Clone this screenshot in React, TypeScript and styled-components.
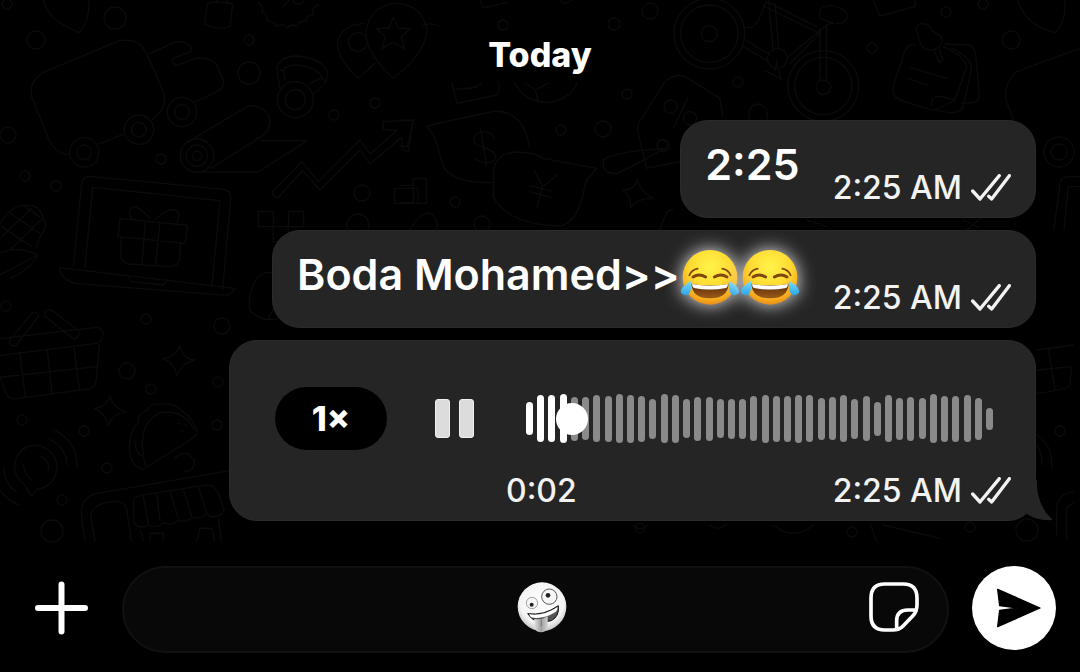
import React, { useState } from "react";
import styled, { createGlobalStyle } from "styled-components";

const GlobalStyle = createGlobalStyle`
  *, *::before, *::after { box-sizing: border-box; }
  body {
    margin: 0;
    background: #000;
    color: #fff;
    font-family: Inter, "Liberation Sans", sans-serif;
  }
  button, input { font: inherit; color: inherit; }
`;

const Page = styled.main`
  display: flex;
  flex-direction: column;
  min-height: 100vh;
  overflow: hidden;
`;

const Chat = styled.section`
  position: relative;
  flex: 1;
  display: flex;
  flex-direction: column;
  gap: 45px;
  padding: 35px 44px 24px;
`;

const Wallpaper = styled.svg`
  position: absolute;
  inset: 0;
  width: 100%;
  height: 100%;
  fill: none;
  stroke: #0b0b0b;
  stroke-width: 4;
  stroke-linecap: round;
  stroke-linejoin: round;
`;

const DayLabel = styled.h1`
  position: relative;
  align-self: center;
  margin: 0;
  font-size: 34px;
  line-height: 40px;
  font-weight: 800;
`;

const Messages = styled.ol`
  position: relative;
  display: flex;
  flex-direction: column;
  align-items: flex-end;
  gap: 12px;
  margin: 0;
  padding: 0;
  list-style: none;
`;

const Bubble = styled.li<{ $voice?: boolean }>`
  position: relative;
  display: flex;
  align-items: ${(p) => (p.$voice ? "flex-start" : "stretch")};
  gap: ${(p) => (p.$voice ? 48 : 33)}px;
  width: ${(p) => (p.$voice ? "100%" : "auto")};
  max-width: ${(p) => (p.$voice ? "807px" : "100%")};
  padding: ${(p) => (p.$voice ? "46px 24px 11px 45px" : "17px 24px 11px")};
  border: 1px solid #2b2b2b;
  border-radius: 28px;
  background: #252525;
`;

const MessageText = styled.p`
  display: flex;
  margin: 0;
  font-size: 43px;
  line-height: 52px;
  font-weight: 600;
`;

const Meta = styled.span`
  display: flex;
  align-items: center;
  align-self: flex-end;
  gap: 9px;
  padding-top: 32px;
  font-size: 32px;
  line-height: 36px;
  font-weight: 500;
  color: #f2f2f2;
`;

const Ticks = styled.svg`
  width: 40px;
  height: 28px;
  fill: none;
  stroke: #f2f2f2;
  stroke-width: 10;
  stroke-linecap: round;
  stroke-linejoin: round;
`;

const Laugh = styled.svg`
  width: 60px;
  height: 58px;
  filter: drop-shadow(0 0 9px rgba(255, 255, 255, 0.9));
`;

const Tail = styled.svg`
  position: absolute;
  right: -17px;
  bottom: -1px;
  width: 32px;
  height: 42px;
`;

const SpeedButton = styled.button`
  width: 112px;
  height: 63px;
  padding: 0;
  border: 0;
  border-radius: 32px;
  background: #000;
  font-size: 34px;
  line-height: 40px;
  font-weight: 800;
`;

const PauseButton = styled.button`
  display: flex;
  justify-content: space-between;
  align-items: center;
  width: 39px;
  height: 63px;
  padding: 0;
  border: 0;
  background: none;
`;

const PauseBar = styled.span`
  width: 15px;
  height: 39px;
  border: 1px solid #f0f0f0;
  border-radius: 3px;
  background: #dcdcdc;
`;

const Player = styled.div`
  flex: 1;
  display: flex;
  flex-direction: column;
  gap: 23px;
  margin-left: -16px;
`;

const Track = styled.div`
  position: relative;
  display: flex;
  justify-content: space-between;
  align-items: center;
  height: 63px;
  margin: 0 18px 0 20px;
`;

const WaveBar = styled.span<{ $played: boolean }>`
  width: 7px;
  border-radius: 4px;
  background: ${(p) => (p.$played ? "#fff" : "#8a8a8a")};
`;

const Seek = styled.input`
  position: absolute;
  inset: 0;
  width: 100%;
  height: 100%;
  margin: 0;
  appearance: none;
  background: transparent;

  &::-webkit-slider-thumb {
    appearance: none;
    width: 32px;
    height: 32px;
    border-radius: 50%;
    background: #fff;
  }
`;

const PlayerFooter = styled.div`
  display: flex;
  justify-content: space-between;

  ${Meta} { padding-top: 0; }
`;

const Composer = styled.form`
  position: relative;
  display: flex;
  align-items: flex-start;
  gap: 23px;
  padding: 21px 24px 19px 35px;
`;

const AttachButton = styled.button`
  width: 53px;
  height: 84px;
  margin-right: 11px;
  padding: 0;
  border: 0;
  background: none;
`;

const Field = styled.div`
  flex: 1;
  display: grid;
  grid-template-columns: 1fr auto;
  align-items: center;
  height: 87px;
  padding: 0 28px 5px;
  border: 2px solid #111;
  border-radius: 44px;
  background: #080808;
`;

const TextBox = styled.input`
  grid-area: 1 / 1 / 2 / 3;
  width: 100%;
  height: 100%;
  border: 0;
  outline: 0;
  background: none;
  font-size: 32px;
`;

const DraftEmoji = styled.svg`
  grid-area: 1 / 1 / 2 / 3;
  justify-self: center;
  width: 50px;
  height: 52px;
  margin-left: 12px;
  pointer-events: none;
`;

const StickerButton = styled.button`
  grid-area: 1 / 2 / 2 / 3;
  width: 50px;
  height: 50px;
  padding: 0;
  border: 0;
  background: none;
`;

const SendButton = styled.button`
  width: 84px;
  height: 84px;
  padding: 0;
  border: 0;
  border-radius: 50%;
  background: #fff;
`;

const Icon = styled.svg`
  display: block;
  width: 100%;
  height: 100%;
`;

const WAVE = [
  33, 47, 47, 49, 44, 43, 47, 46, 49, 48, 46, 40, 49, 48, 39, 44, 44, 39, 40, 40, 45,
  48, 46, 46, 48, 47, 42, 43, 47, 40, 45, 34, 47, 42, 44, 41, 49, 46, 46, 47, 42, 22,
];

const DOTS: [number, number, number][] = [
  [7, 4, 5], [36, 40, 9], [115, 18, 11], [249, 40, 5], [249, 73, 11], [8, 135, 8],
  [25, 176, 5], [56, 186, 5], [161, 159, 5], [334, 115, 5], [375, 103, 5], [362, 193, 8],
  [358, 225, 11], [561, 130, 5], [603, 129, 8], [650, 11, 8], [627, 94, 5], [455, 202, 5],
  [482, 224, 8], [872, 48, 5], [946, 12, 5], [983, 4, 5], [1011, 40, 9], [738, 82, 5],
  [662, 145, 5], [6, 306, 5], [146, 319, 5], [222, 326, 8], [127, 371, 8], [151, 389, 5],
  [218, 382, 5], [22, 420, 5], [84, 431, 5], [217, 425, 5], [107, 468, 5], [62, 500, 5],
  [52, 531, 11], [1060, 431, 5], [852, 532, 5], [1027, 530, 11], [970, 527, 5], [1059, 152, 15],
  [1059, 152, 8], [640, 528, 5], [503, 25, 5], [614, 24, 6],
];

const ChatWallpaper = () => (
  <Wallpaper viewBox="0 0 1080 548" preserveAspectRatio="xMinYMin slice" aria-hidden="true">
    <g style={{ strokeWidth: 1.3 }}>
      {DOTS.map(([x, y, r], i) => (
        <circle key={i} cx={x} cy={y} r={r} />
      ))}
    </g>
    <g transform="scale(.3333)">
      {/* heart, gift tag, rosette */}
      <path d="M130 0Q140 60 238 98Q272 55 266 0M622 10L614 72Q655 92 690 80L698 12Q660 2 622 10M648 8l4-10M682 6l0-10M775 8q15 10 12 30q18 4 14 26q20-4 28 16q20-14 32 4q14-16 32-4q4-20 26-16q-2-18 20-20q-4-20 16-30M850 20l20-22M878 0a18 18 0 0 0 34 0" />
      {/* truck */}
      <path d="M208 464Q165 462 145 415L95 290Q86 240 135 215L360 122Q415 112 440 160L490 275Q505 320 458 358M298 432L372 402M448 160L530 125Q570 125 576 152L520 175Q508 185 530 196L590 174Q640 170 655 205L672 245Q670 268 650 276L584 306" />
      <circle cx="253" cy="457" r="44" /><circle cx="253" cy="457" r="22" />
      <circle cx="417" cy="389" r="44" /><circle cx="417" cy="389" r="22" />
      <circle cx="546" cy="336" r="44" /><circle cx="546" cy="336" r="22" />
      {/* kettlebell */}
      <circle cx="886" cy="299" r="54" /><circle cx="886" cy="299" r="30" />
      <path d="M840 265L830 205Q840 170 890 168Q970 175 984 220Q980 260 940 280M856 240L850 212Q860 192 900 196Q955 205 966 232L930 250M836 210L850 212M966 235L978 245" />
      {/* yoga mat */}
      <circle cx="591" cy="467" r="50" /><circle cx="591" cy="467" r="32" /><circle cx="591" cy="467" r="14" />
      <path d="M570 422L745 318Q800 315 810 360Q810 395 780 412L632 505M780 422H922L775 516H580" />
      {/* map pins */}
      <path d="M1125 190L1075 235Q1010 175 1012 125Q1025 75 1090 70M1180 235Q1098 160 1098 95Q1110 15 1190 10Q1270 15 1282 95Q1270 165 1180 235M1180 52l14 32 36 2-26 24 10 36-34-20-34 20 10-36-26-24 36-2z" />
      <circle cx="1074" cy="126" r="28" />
      {/* rising graph */}
      <path d="M818 575L905 485L955 545L1080 420L1110 462L1190 392L1150 388V365L1240 360L1225 455L1208 450L1205 412L1110 492L1080 450L960 570L908 512L835 592Q818 596 818 575" />
      {/* laptop with gift */}
      <path d="M220 800L245 550Q250 525 280 530L670 568Q694 572 692 595L668 870M255 803L278 562L660 602L636 860M178 803L705 865Q695 880 680 886L225 850Q185 840 178 803M382 826L395 845L490 855L505 838M360 655L562 676L556 730L354 710ZM364 712L362 770Q368 788 385 792L510 800Q535 798 538 780L542 730M436 664L426 794M480 668L466 798M450 656Q400 600 390 632Q386 652 400 658M465 658Q520 610 536 640Q536 660 530 668" />
      {/* corn */}
      <path d="M0 670Q30 620 70 616Q120 612 128 650Q148 680 120 710L110 740M5 680L95 740M30 640L120 700M95 625L5 710M128 655L30 750M70 616L118 650M0 760Q50 735 112 765Q90 810 30 835M112 765L0 825" />
      {/* blocks */}
      <path d="M775 635h45v45h-45zM820 680h45v45h-45zM866 635h45v45h-45zM1184 565h70v45h-70zM1240 610v-75h40v75z" />
      {/* basket */}
      <path d="M0 1016L290 982Q312 985 308 1010Q305 1025 290 1030L0 1066M0 1130L18 1180Q30 1200 50 1196L270 1166Q285 1160 288 1145L298 1034M60 1062L76 1190M142 1052L156 1180M222 1042L238 1170M0 1132L290 1100M28 1022L95 940Q112 930 116 948L48 1036Q28 1044 28 1022M134 938Q144 922 160 934L238 994Q238 1012 222 1018L134 948Z" />
      {/* sparkles */}
      <path d="M540 1036Q545 1075 584 1080Q545 1090 530 1126Q525 1090 490 1076Q530 1070 540 1036M330 1188Q338 1225 378 1236Q338 1240 324 1276Q318 1240 284 1226Q320 1220 330 1188" />
      {/* taco */}
      <path d="M430 1408Q390 1400 388 1340Q390 1290 414 1270Q412 1240 440 1232Q455 1205 480 1214Q520 1205 545 1232Q585 1260 592 1298Q588 1310 570 1320L430 1408M430 1365Q415 1270 480 1238Q550 1226 584 1290M404 1320Q405 1360 430 1370L438 1400M536 1270l4 2M556 1276l4 2M544 1292l4 2M525 1375Q560 1340 584 1385Q580 1420 550 1412" />
      {/* voice beacon */}
      <path d="M95 1490L75 1456Q40 1430 44 1390Q58 1335 110 1336Q165 1345 172 1400Q165 1460 110 1468ZM160 1290Q230 1320 232 1400M150 1318Q200 1345 202 1396M12 1402Q10 1450 50 1476M0 1470Q20 1500 55 1514M125 1370Q150 1385 145 1410M70 1395Q75 1430 95 1440" />
      {/* market stall */}
      <path d="M255 1625L244 1540Q245 1490 290 1480L690 1412M285 1625L272 1550Q275 1515 320 1508Q375 1495 380 1530L395 1625M400 1500Q405 1488 430 1485L620 1455Q645 1455 655 1480L672 1530Q670 1545 650 1548Q630 1555 620 1540Q605 1560 578 1552Q560 1570 535 1560Q520 1580 490 1568Q470 1588 445 1575Q420 1590 402 1570ZM430 1490L445 1570M470 1484L480 1560M510 1475L535 1555M550 1468L575 1548M595 1460L620 1540M422 1590L430 1625M655 1555L665 1625M450 1625V1600H490V1625M590 1625L600 1585H635L645 1625" />
      {/* nut */}
      <path d="M826 820Q790 810 770 835Q740 890 750 930Q785 970 836 955M825 920L805 955" />
    </g>
    <g transform="translate(400 0) scale(.3333)">
      {/* calendar and ball */}
      <path d="M155 248L172 310L290 285Q302 270 294 245M165 268L230 262M210 268L245 250M345 248Q370 305 450 308Q520 290 530 250M375 248l30 22 40-20M405 270l10 30M240 0L250 24L320 8M480 0Q495 20 515 0M65 78Q90 65 118 78" />
      {/* dollar and yen bags */}
      <path d="M80 380L105 372L280 334Q370 330 388 440M80 380Q100 400 104 412L130 500Q160 550 275 548M280 530Q275 465 345 456Q400 455 430 475L590 505L560 540L545 600Q520 680 470 678Q320 670 280 590ZM284 415Q265 385 230 400Q205 430 250 442Q300 460 284 480Q255 500 225 475M242 385L260 500M402 510L428 560L472 525M428 560L412 622M390 556L456 574M388 575L452 592" />
      {/* price tag */}
      <path d="M740 505L712 390Q712 370 725 355L795 245Q830 215 860 232L960 295L968 350M740 505L860 480M864 292L822 382M610 480Q640 455 790 445Q720 490 650 520Q605 525 610 480" />
      <circle cx="812" cy="320" r="20" /><circle cx="870" cy="355" r="20" /><circle cx="790" cy="436" r="18" />
      <path d="M712 540Q722 575 758 596Q710 595 692 622Q695 590 668 570Q705 570 712 540M30 690Q60 635 90 640Q120 660 108 690M0 556h40v52H0M0 360l40 2l-18 78L0 438" />
    </g>
    <g transform="translate(660 0) scale(.3333)">
      {/* bicycle */}
      <circle cx="148" cy="101" r="106" /><circle cx="148" cy="101" r="86" /><circle cx="148" cy="101" r="24" />
      <circle cx="490" cy="258" r="106" /><circle cx="490" cy="258" r="86" /><circle cx="490" cy="262" r="22" />
      <path d="M480 240V85M500 240V80M320 5L470 80M310 18L480 100M326 0L340 155M345 10L356 150M385 170L500 75L520 68M390 190L480 100M255 118L330 165M250 140L325 185M250 82Q285 90 300 50L318 5M520 70L480 55Q470 22 510 16Q560 25 562 50Q555 75 530 70" />
      <circle cx="352" cy="175" r="30" /><path d="M352 178L345 212M315 212L365 238M350 190L362 235" />
      {/* pinned notes */}
      <path d="M765 133Q740 132 732 160L698 265Q700 290 720 300L820 332Q850 320 885 300L920 200Q915 170 850 140M815 318Q810 285 850 290Q870 300 885 295M855 132L930 135Q945 145 948 170L958 290Q955 310 930 308L905 310M875 145Q930 170 935 205L910 320Q900 340 870 338L830 332M750 202L862 236M745 235L805 256M775 105Q760 85 780 72Q810 68 814 90L845 110Q850 140 820 150Q780 155 775 105M822 150L838 188L848 180L838 148" />
      {/* card, heart, truck edge */}
      <path d="M640 0L660 48L765 20V0M1072 0Q1100 80 1188 98Q1222 50 1214 0M1260 145L1070 215Q1030 250 1038 300L1060 358M1182 690L1200 550Q1205 530 1225 530H1260M1212 690L1225 560H1260M268 355Q262 315 295 312Q325 318 322 355M0 690Q20 620 40 630M440 660l60 20M910 660l50 24M960 656l-40 34" />
    </g>
    <g transform="translate(600 335) scale(.3333)">
      <path d="M1310 45L1420 30M1345 40L1365 165M1310 105L1415 95L1410 150Q1400 165 1310 175M1310 300Q1360 330 1355 400M1310 330Q1328 350 1325 390M1370 600V520Q1375 475 1420 470M1400 610V530Q1400 510 1420 505M810 565L830 620M850 570L1020 610M520 570Q580 620 640 570M330 570Q355 590 380 568M100 570Q120 595 145 568" />
    </g>
  </Wallpaper>
);

const ReadTime = () => (
  <Meta>
    <time>2:25 AM</time>
    <Ticks viewBox="0 0 120 84" role="img" aria-label="Delivered">
      <path d="M5 51L27 75L85 5M53 67L62 75L115 5" />
    </Ticks>
  </Meta>
);

const TearsOfJoy = ({ id }: { id: string }) => (
  <Laugh viewBox="0 0 180 174" role="img" aria-label="face with tears of joy">
    <defs>
      <radialGradient id={`${id}-face`} cx=".5" cy=".3" r=".72">
        <stop offset="0" stopColor="#fff34a" />
        <stop offset=".5" stopColor="#ffdc33" />
        <stop offset=".85" stopColor="#f6ab1f" />
        <stop offset="1" stopColor="#e58613" />
      </radialGradient>
      <linearGradient id={`${id}-tear`} x1="0" y1="0" x2="0" y2="1">
        <stop offset="0" stopColor="#7fdcfa" />
        <stop offset="1" stopColor="#2aa5e8" />
      </linearGradient>
      <linearGradient id={`${id}-mouth`} x1="0" y1="0" x2="0" y2="1">
        <stop offset="0" stopColor="#5a2a08" />
        <stop offset="1" stopColor="#9a5a18" />
      </linearGradient>
    </defs>
    <circle cx="90" cy="88" r="82" fill={`url(#${id}-face)`} />
    <g fill="none" stroke="#80470c" strokeLinecap="round">
      <path d="M28 82Q34 66 53 62M152 82Q146 66 127 62" strokeWidth="5" />
      <path d="M39 87Q57 75 77 87M103 87Q123 75 141 87" strokeWidth="9" />
    </g>
    <path d="M34 107Q90 118 146 107Q144 150 90 151Q36 150 34 107Z" fill={`url(#${id}-mouth)`} />
    <path d="M36 108Q90 118 144 108Q143 118 138 120Q90 129 42 120Q37 118 36 108Z" fill="#fff" />
    <path d="M33 98Q37 135 21 141Q8 144 3 133Q-1 119 33 98Z" fill={`url(#${id}-tear)`} />
    <path d="M147 98Q143 135 159 141Q172 144 177 133Q181 119 147 98Z" fill={`url(#${id}-tear)`} />
  </Laugh>
);

export default function App() {
  const [position, setPosition] = useState(2);

  return (
    <>
      <GlobalStyle />
      <Page>
        <Chat>
          <ChatWallpaper />
          <DayLabel>Today</DayLabel>
          <Messages>
            <Bubble>
              <MessageText>2:25</MessageText>
              <ReadTime />
            </Bubble>
            <Bubble>
              <MessageText>
                Boda Mohamed&gt;&gt;
                <TearsOfJoy id="joy-a" />
                <TearsOfJoy id="joy-b" />
              </MessageText>
              <ReadTime />
            </Bubble>
            <Bubble $voice>
              <SpeedButton type="button">1×</SpeedButton>
              <PauseButton type="button" aria-label="Pause">
                <PauseBar />
                <PauseBar />
              </PauseButton>
              <Player>
                <Track>
                  {WAVE.map((height, i) => (
                    <WaveBar key={i} $played={i < position * 2} style={{ height }} />
                  ))}
                  <Seek
                    type="range"
                    min={0}
                    max={29}
                    value={position}
                    onChange={(e) => setPosition(Number(e.target.value))}
                    aria-label="Seek in voice message"
                  />
                </Track>
                <PlayerFooter>
                  <Meta>0:{String(position).padStart(2, "0")}</Meta>
                  <ReadTime />
                </PlayerFooter>
              </Player>
              <Tail viewBox="0 0 32 42" aria-hidden="true">
                <path d="M4 0H16Q16 27 32 41Q17 42 7 35L0 20Z" fill="#252525" />
                <path d="M16 1Q16 27 32 41" fill="none" stroke="#2b2b2b" />
              </Tail>
            </Bubble>
          </Messages>
        </Chat>

        <Composer onSubmit={(e) => e.preventDefault()}>
          <AttachButton type="button" aria-label="Attach">
            <Icon viewBox="0 0 53 53" fill="none" stroke="#fff" strokeWidth="6" strokeLinecap="round">
              <path d="M26.500 3V50M3 26.500H50" />
            </Icon>
          </AttachButton>
          <Field>
            <TextBox type="text" aria-label="Message" />
            <DraftEmoji viewBox="52 32 150 156" role="img" aria-label="zany face">
              <defs>
                <radialGradient id="zany-face" cx=".5" cy=".4" r=".6">
                  <stop offset="0" stopColor="#fff" />
                  <stop offset=".75" stopColor="#f4f4f4" />
                  <stop offset="1" stopColor="#c4c4c4" />
                </radialGradient>
                <linearGradient id="zany-tongue" x1="0" y1="0" x2="1" y2="0">
                  <stop offset="0" stopColor="#e2e2e2" />
                  <stop offset=".5" stopColor="#a0a0a0" />
                  <stop offset="1" stopColor="#d0d0d0" />
                </linearGradient>
              </defs>
              <circle cx="127" cy="109" r="73" fill="url(#zany-face)" />
              <circle cx="97" cy="98" r="17" fill="#f6f6f6" stroke="#777" strokeWidth="2" />
              <circle cx="149" cy="79" r="23" fill="#f6f6f6" stroke="#555" strokeWidth="3" />
              <circle cx="96" cy="103" r="6" fill="#222" />
              <circle cx="145" cy="75" r="7" fill="#222" />
              <path d="M84 130Q132 137 176 106Q180 138 155 151Q105 165 84 130Z" fill="#555" stroke="#111" strokeWidth="3" />
              <path d="M88 132Q132 138 174 110Q174 121 168 125Q130 148 94 141Z" fill="#fff" />
              <path d="M104 146Q125 150 144 138V170Q140 186 124 186Q108 186 104 170Z" fill="url(#zany-tongue)" />
              <path d="M125 148V168" stroke="#777" strokeWidth="3" />
            </DraftEmoji>
            <StickerButton type="button" aria-label="Stickers">
              <Icon viewBox="61 98 150 150" fill="none" stroke="#fff" strokeWidth="11" strokeLinecap="round" strokeLinejoin="round">
                <path d="M108 104H164Q205 104 205 146V166Q205 186 192 200L164 229Q152 242 132 242H108Q67 242 67 200V146Q67 104 108 104Z" />
                <path d="M202 182H178Q144 182 144 214V238" />
              </Icon>
            </StickerButton>
          </Field>
          <SendButton type="submit" aria-label="Send">
            <Icon viewBox="367 47 252 252">
              <path
                d="M444 117L571 173L444 229L450 180L506 173L450 166Z"
                fill="#000"
                stroke="#000"
                strokeWidth="4"
                strokeLinejoin="round"
              />
            </Icon>
          </SendButton>
        </Composer>
      </Page>
    </>
  );
}
